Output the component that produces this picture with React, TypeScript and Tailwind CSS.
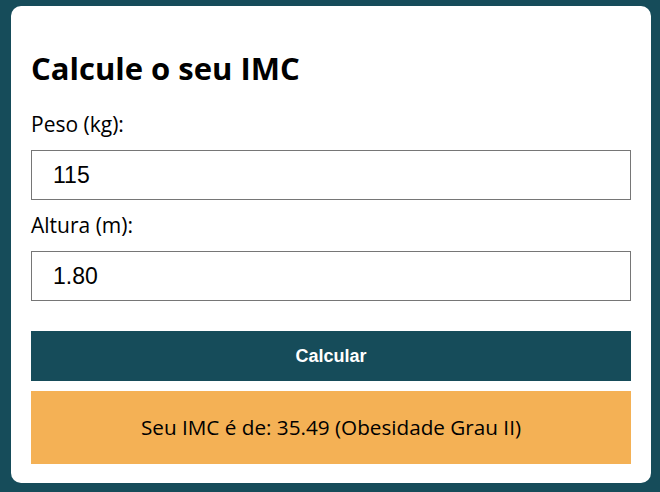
import React, { useState } from 'react';

const classify = (imc: number) => {
  if (imc < 18.5) return 'Abaixo do peso';
  if (imc < 25) return 'Peso normal';
  if (imc < 30) return 'Sobrepeso';
  if (imc < 35) return 'Obesidade Grau I';
  if (imc < 40) return 'Obesidade Grau II';
  return 'Obesidade Grau III';
};

const App: React.FC = () => {
  const [peso, setPeso] = useState('115');
  const [altura, setAltura] = useState('1.80');
  const [result, setResult] = useState<string | null>('Seu IMC é de: 35.49 (Obesidade Grau II)');

  const handleCalc = () => {
    const p = parseFloat(peso);
    const a = parseFloat(altura);
    if (!p || !a) return;
    const imc = p / (a * a);
    setResult(`Seu IMC é de: ${imc.toFixed(2)} (${classify(imc)})`);
  };

  return (
    <div className="min-h-[492px] w-[660px] bg-[#164c5a] pt-[6px] pl-[11px]" style={{ fontFamily: '"Open Sans", sans-serif' }}>
      <div className="w-[640px] h-[477px] bg-white rounded-[10px] px-[20px] flex flex-col">
        <h1 className="mt-[41px] mb-[10px] text-[31px] leading-[42px] font-bold text-black">Calcule o seu IMC</h1>
        <label className="py-[10px] text-[21px] leading-[31px] text-black">Peso (kg):</label>
        <input
          type="text"
          value={peso}
          onChange={(e) => setPeso(e.target.value)}
          className="h-[50px] w-full border border-[#767676] px-[21px] text-[23px] text-black outline-none"
          style={{ fontFamily: '"Liberation Sans", Arial, sans-serif' }}
        />
        <label className="py-[10px] text-[21px] leading-[31px] text-black">Altura (m):</label>
        <input
          type="text"
          value={altura}
          onChange={(e) => setAltura(e.target.value)}
          className="h-[50px] w-full border border-[#767676] px-[21px] text-[23px] text-black outline-none"
          style={{ fontFamily: '"Liberation Sans", Arial, sans-serif' }}
        />
        <button
          type="button"
          onClick={handleCalc}
          className="mt-[30px] h-[50px] w-full bg-[#164c5a] text-white text-[18px] font-bold cursor-pointer"
          style={{ fontFamily: '"Liberation Sans", Arial, sans-serif' }}
        >
          Calcular
        </button>
        {result && (
          <div className="mt-[10px] h-[73px] w-full bg-[#f4b155] flex items-center justify-center text-[20.7px] text-black">
            {result}
          </div>
        )}
      </div>
    </div>
  );
};

export default App;
